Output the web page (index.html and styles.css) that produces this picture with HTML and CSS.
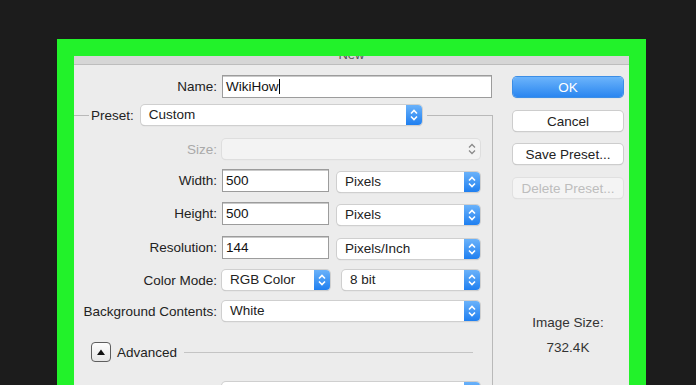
FILE: index.html
```html
<!DOCTYPE html>
<html lang="en">

<head>
    <meta charset="UTF-8">
    <meta name="viewport" content="width=device-width, initial-scale=1.0">
    <title>New Document</title>
    <link rel="stylesheet" href="styles.css">
</head>

<body>

    <div class="frame">
        <div class="dialog">
            <div class="titlebar"><span>New</span></div>

            <div class="dialog-body">
                <!-- Left side: the form -->
                <div class="form">
                    <div class="row row-name">
                        <label class="lbl">Name:</label>
                        <div class="field field-name">WikiHow<span class="caret"></span></div>
                    </div>

                    <fieldset class="group">
                        <legend class="preset">
                            <span class="preset-lbl">Preset:</span>
                            <div class="select select-preset">Custom
                                <span class="cap"><svg viewBox="0 0 16 20" width="16" height="20"><path d="M5 8.5 L8 5.5 L11 8.5 M5 11.5 L8 14.5 L11 11.5" fill="none" stroke="#fff" stroke-width="1.6"/></svg></span>
                            </div>
                        </legend>

                        <div class="row row-size">
                            <label class="lbl lbl-off">Size:</label>
                            <div class="select select-off select-wide">
                                <span class="cap-off"><svg viewBox="0 0 16 20" width="16" height="20"><path d="M5 8.5 L8 5.5 L11 8.5 M5 11.5 L8 14.5 L11 11.5" fill="none" stroke="#8a8a8a" stroke-width="1.3"/></svg></span>
                            </div>
                        </div>

                        <div class="row row-num">
                            <label class="lbl">Width:</label>
                            <div class="field field-num">500</div>
                            <div class="select select-unit">Pixels
                                <span class="cap"><svg viewBox="0 0 16 20" width="16" height="20"><path d="M5 8.5 L8 5.5 L11 8.5 M5 11.5 L8 14.5 L11 11.5" fill="none" stroke="#fff" stroke-width="1.6"/></svg></span>
                            </div>
                        </div>

                        <div class="row row-num">
                            <label class="lbl">Height:</label>
                            <div class="field field-num">500</div>
                            <div class="select select-unit">Pixels
                                <span class="cap"><svg viewBox="0 0 16 20" width="16" height="20"><path d="M5 8.5 L8 5.5 L11 8.5 M5 11.5 L8 14.5 L11 11.5" fill="none" stroke="#fff" stroke-width="1.6"/></svg></span>
                            </div>
                        </div>

                        <div class="row row-num row-res">
                            <label class="lbl">Resolution:</label>
                            <div class="field field-num">144</div>
                            <div class="select select-unit">Pixels/Inch
                                <span class="cap"><svg viewBox="0 0 16 20" width="16" height="20"><path d="M5 8.5 L8 5.5 L11 8.5 M5 11.5 L8 14.5 L11 11.5" fill="none" stroke="#fff" stroke-width="1.6"/></svg></span>
                            </div>
                        </div>

                        <div class="row row-mode">
                            <label class="lbl">Color Mode:</label>
                            <div class="select select-mode">RGB Color
                                <span class="cap"><svg viewBox="0 0 16 20" width="16" height="20"><path d="M5 8.5 L8 5.5 L11 8.5 M5 11.5 L8 14.5 L11 11.5" fill="none" stroke="#fff" stroke-width="1.6"/></svg></span>
                            </div>
                            <div class="select select-bits">8 bit
                                <span class="cap"><svg viewBox="0 0 16 20" width="16" height="20"><path d="M5 8.5 L8 5.5 L11 8.5 M5 11.5 L8 14.5 L11 11.5" fill="none" stroke="#fff" stroke-width="1.6"/></svg></span>
                            </div>
                        </div>

                        <div class="row row-bg">
                            <label class="lbl">Background Contents:</label>
                            <div class="select select-wide">White
                                <span class="cap"><svg viewBox="0 0 16 20" width="16" height="20"><path d="M5 8.5 L8 5.5 L11 8.5 M5 11.5 L8 14.5 L11 11.5" fill="none" stroke="#fff" stroke-width="1.6"/></svg></span>
                            </div>
                        </div>

                        <!-- Advanced section -->
                        <div class="advanced">
                            <div class="disclosure"><svg viewBox="0 0 10 8" width="10" height="8"><path d="M1 7 L5 1.5 L9 7 Z" fill="#111"/></svg></div>
                            <span class="adv-lbl">Advanced</span>
                            <div class="adv-line"></div>
                        </div>

                        <div class="row row-profile">
                            <label class="lbl">Color Profile:</label>
                            <div class="select select-wide">sRGB IEC61966-2.1
                                <span class="cap"><svg viewBox="0 0 16 20" width="16" height="20"><path d="M5 8.5 L8 5.5 L11 8.5 M5 11.5 L8 14.5 L11 11.5" fill="none" stroke="#fff" stroke-width="1.6"/></svg></span>
                            </div>
                        </div>
                    </fieldset>
                </div>

                <!-- Right side: buttons and image size -->
                <div class="side">
                    <button class="btn btn-ok">OK</button>
                    <button class="btn">Cancel</button>
                    <button class="btn">Save Preset...</button>
                    <button class="btn btn-off">Delete Preset...</button>

                    <div class="size-info">
                        <div class="size-lbl">Image Size:</div>
                        <div class="size-val">732.4K</div>
                    </div>
                </div>
            </div>
        </div>
    </div>

</body>

</html>
```

FILE: styles.css
```css
/* General Reset */
* {
    margin: 0;
    padding: 0;
    box-sizing: border-box;
}

html, body {
    height: 100%;
    overflow: hidden;
}

body {
    font-family: "Liberation Sans", Arial, sans-serif;
    font-size: 13.5px;
    background-color: #1c1c1c;
    color: #222;
}

/* Green frame round the dialog */
.frame {
    width: 589px;
    height: 420px;
    margin: 39px 0 0 57px;
    padding: 17px 17px 0;
    background-color: #22f22a;
}

.dialog {
    height: 100%;
    background-color: #ececec;
}

/* Title bar (mostly hidden under the frame) */
.titlebar {
    height: 9px;
    overflow: hidden;
    background-color: #d6d6d6;
    border-bottom: 1px solid #bdbdbd;
    text-align: center;
    color: #555;
}

.titlebar span {
    display: block;
    line-height: 22px;
    margin-top: -12px;
    font-size: 13px;
}

.dialog-body {
    display: flex;
}

/* Form */
.form {
    width: 419px;
    padding-top: 10px;
}

.row {
    display: flex;
    align-items: center;
    gap: 5px;
}

.lbl {
    width: 143px;
    text-align: right;
    flex-shrink: 0;
}

.lbl-off {
    color: #a9a9a9;
}

.field {
    height: 23px;
    background-color: #fff;
    border: 1px solid #9c9c9c;
    box-shadow: inset 0 1px 0 #c9c9c9;
    padding: 0 3px;
    line-height: 21px;
    color: #111;
}

.field-name {
    width: 270px;
}

.caret {
    display: inline-block;
    width: 1px;
    height: 15px;
    background-color: #000;
    vertical-align: -3px;
}

.field-num {
    width: 107px;
}

/* Pop-up menus */
.select {
    position: relative;
    height: 20px;
    line-height: 20px;
    padding-left: 8px;
    background-color: #fff;
    border-radius: 4px;
    box-shadow: 0 0 0 1px #cfcfcf, 0 1px 1px #b5b5b5;
    color: #222;
}

.cap {
    position: absolute;
    top: 0;
    right: 0;
    width: 16px;
    height: 20px;
    border-radius: 0 4px 4px 0;
    background: linear-gradient(#6ab2fa, #1f7ff0);
}

.cap svg,
.cap-off svg {
    display: block;
}

.cap-off {
    position: absolute;
    top: 0;
    right: 0;
}

.select-off {
    background-color: #f3f3f3;
    box-shadow: 0 0 0 1px #dedede, 0 1px 1px #d2d2d2;
}

.select-preset {
    width: 281px;
}

.select-wide {
    width: 258px;
}

.select-unit {
    width: 143px;
    margin-left: 3px;
    align-self: flex-end;
}

.select-mode {
    width: 108px;
}

.select-bits {
    width: 138px;
    margin-left: 7px;
}

/* Preset group box */
.group {
    min-width: 0;
    margin-top: 7px;
    border: none;
    border-top: 1px solid #b9b9b9;
    border-right: 1px solid #b9b9b9;
    height: 400px;
}

.preset {
    display: flex;
    align-items: center;
    margin-left: 15px;
    padding: 0 5px 0 2px;
}

.preset-lbl {
    margin-right: 7px;
}

.row-size {
    margin-top: 14px;
}

.row-num {
    margin-top: 10px;
}

.row-res {
    margin-top: 11px;
}

.row-mode,
.row-bg {
    margin-top: 11px;
}

/* Advanced disclosure */
.advanced {
    display: flex;
    align-items: center;
    margin-top: 21px;
    padding-left: 17px;
    padding-right: 19px;
}

.disclosure {
    width: 20px;
    height: 20px;
    display: flex;
    align-items: center;
    justify-content: center;
    border: 1px solid #5e5e5e;
    border-radius: 4px;
    background: linear-gradient(#fdfdfd, #e6e6e6);
}

.adv-lbl {
    margin-left: 6px;
}

.adv-line {
    flex: 1;
    height: 1px;
    margin-left: 7px;
    background-color: #c4c4c4;
}

.row-profile {
    margin-top: 20px;
}

/* Buttons column */
.side {
    width: 110px;
    margin-left: 20px;
    padding-top: 12px;
    display: flex;
    flex-direction: column;
}

.btn {
    height: 20px;
    font-family: inherit;
    font-size: 13.5px;
    color: #222;
    background-color: #fff;
    border: none;
    border-radius: 4px;
    box-shadow: 0 0 0 1px #cdcdcd, 0 1px 1px #b0b0b0;
    margin-bottom: 14px;
}

.btn:nth-child(3) {
    margin-top: -1px;
}

.btn-ok {
    color: #fff;
    background: linear-gradient(#6cb4fb, #2a86f0);
    box-shadow: 0 0 0 1px #3c8ee6, 0 1px 1px #9bb6d6;
}

.btn-off {
    color: #bdbdbd;
    background-color: #f4f4f4;
    box-shadow: 0 0 0 1px #e0e0e0, 0 1px 1px #d4d4d4;
}

.size-info {
    margin-top: 103px;
    text-align: center;
    color: #333;
    line-height: 16px;
}

.size-val {
    margin-top: 9px;
}
```
